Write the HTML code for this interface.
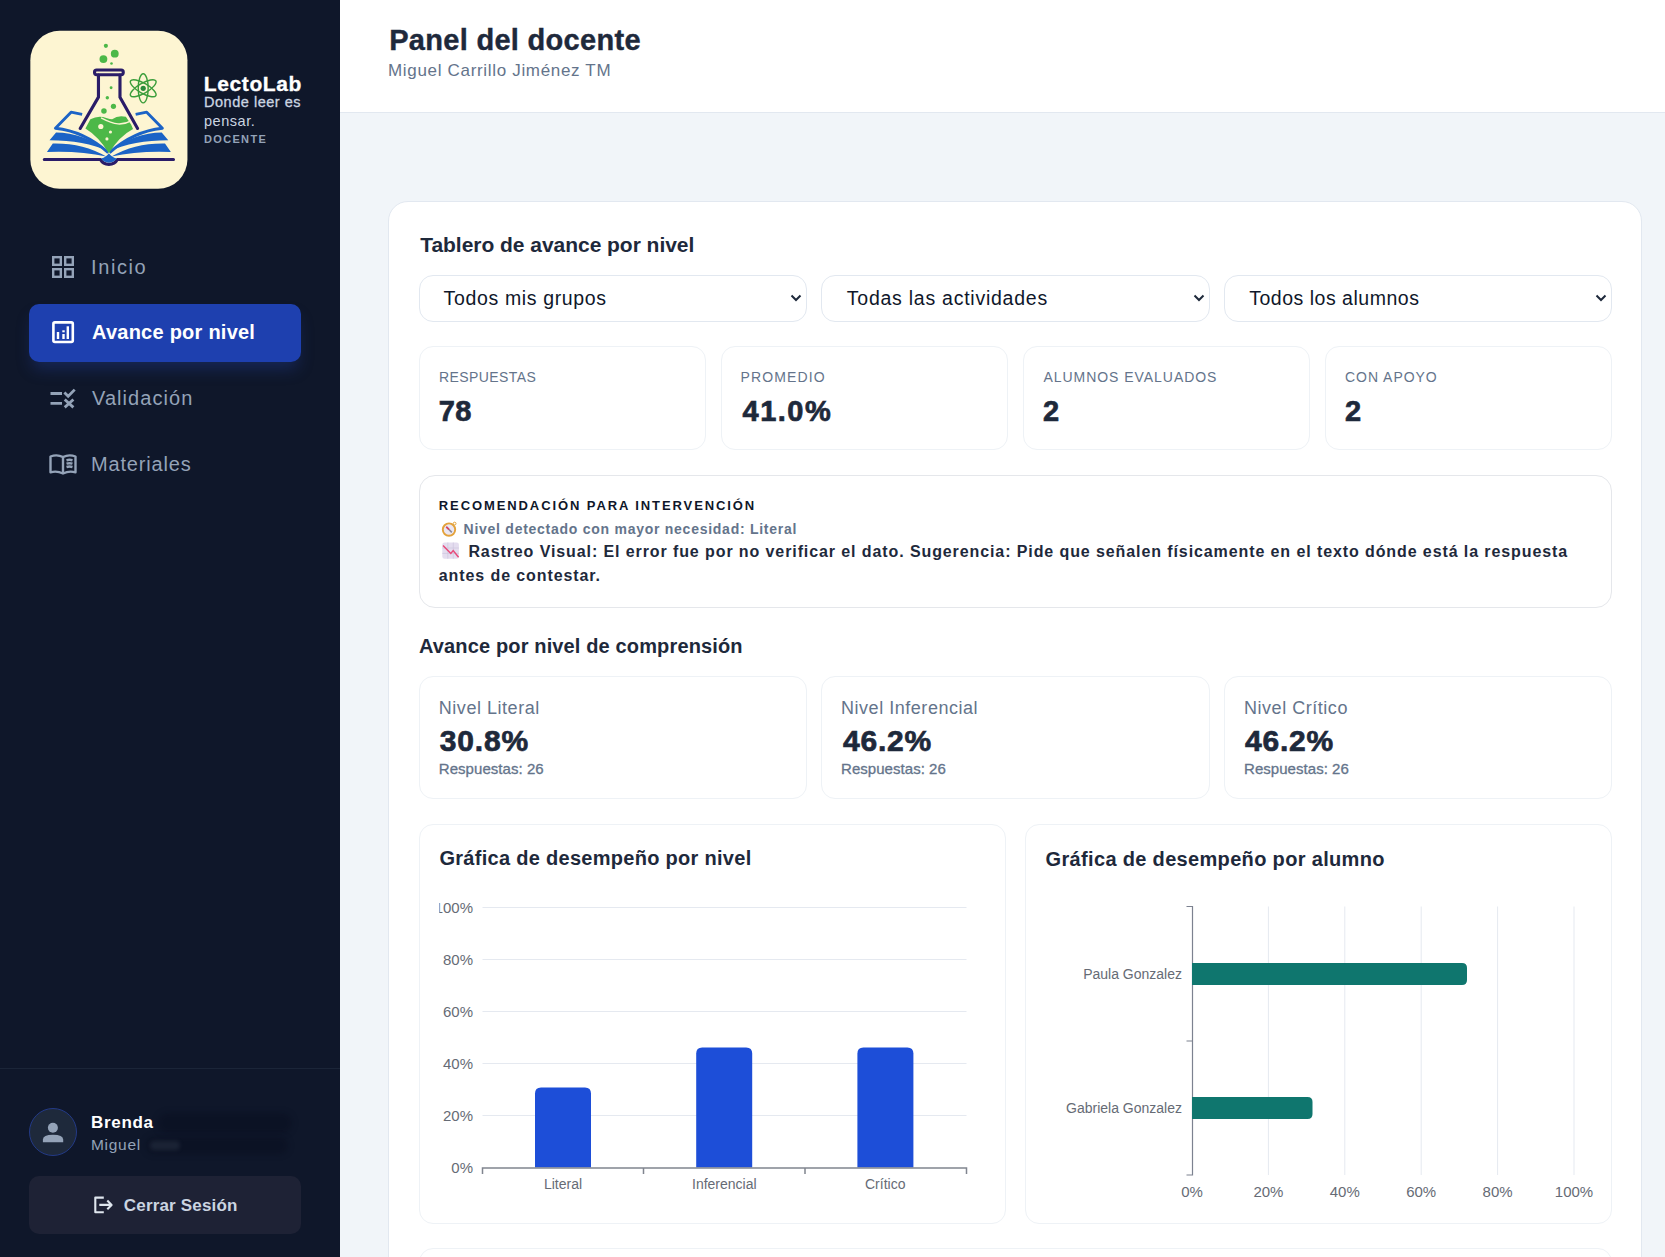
<!DOCTYPE html>
<html><head><meta charset="utf-8">
<style>
*{box-sizing:border-box;margin:0;padding:0}
html,body{width:1665px;height:1257px;overflow:hidden;background:#f1f5f9;font-family:"Liberation Sans",sans-serif}
.a{position:absolute;white-space:nowrap;line-height:1}
#side{position:absolute;left:0;top:0;width:340px;height:1257px;background:#0f172a}
#hdr{position:absolute;left:340px;top:0;width:1325px;height:113px;background:#fff;border-bottom:1px solid #e2e8f0}
.box{position:absolute;background:#fff;border:1px solid #e2e8f0}
.navt{color:#94a3b8;font-size:20px}
.sel{border-radius:14px}
.selt{font-size:20px;color:#1e293b}
.st{border-radius:14px;border-color:#eef2f6}
.stl{font-size:14px;color:#64748b;letter-spacing:0.3px}
.stv{font-size:28px;font-weight:700;color:#1e293b}
.lv{border-radius:14px;border-color:#eef2f6}
.lvl{font-size:19px;color:#64748b}
.lvv{font-size:29px;font-weight:700;color:#1e293b}
.lvr{font-size:15px;color:#64748b}
</style></head><body>
<div id="side">
  <!-- LOGO -->
  <svg class="a" style="left:28px;top:28px" width="164" height="164" viewBox="0 0 1257 1257">
    <rect x="18" y="22" width="1204" height="1210" rx="225" fill="#fdf5d2"/>
    <!-- book pages blue -->
    <g fill="#1b63c6">
      <path d="M165 860 L215 800 Q420 800 620 945 Q430 860 165 860Z"/>
      <path d="M145 950 L190 885 Q420 880 600 985 Q400 940 145 950Z"/>
      <path d="M1075 860 L1025 800 Q820 800 620 945 Q810 860 1075 860Z"/>
      <path d="M1095 950 L1050 885 Q820 880 640 985 Q840 940 1095 950Z"/>
    </g>
    <g fill="none" stroke="#1b63c6" stroke-width="22" stroke-linejoin="round">
      <path d="M415 662 L330 645 L210 768 Q430 790 615 955"/>
      <path d="M825 662 L910 645 L1030 768 Q810 790 625 955"/>
    </g>
    <!-- liquid -->
    <path d="M440 770 L478 700 Q540 665 600 690 Q630 700 645 700 Q690 665 750 680 L790 740 L805 775 Q700 830 620 960 Q540 830 440 770Z" fill="#4cb848"/>
    <path d="M560 688 Q640 730 690 735 Q745 738 790 712" fill="none" stroke="#fdf5d2" stroke-width="11"/>
    <!-- flask -->
    <g fill="none" stroke="#2a1c68" stroke-width="24" stroke-linejoin="round" stroke-linecap="round">
      <path d="M540 360 V530 L400 770"/>
      <path d="M705 360 V530 L840 770"/>
      <rect x="510" y="322" width="220" height="36" rx="16"/>
    </g>
    <g fill="#4cb848">
      <circle cx="597" cy="137" r="16"/><circle cx="665" cy="197" r="30"/><circle cx="578" cy="238" r="30"/><circle cx="640" cy="272" r="10"/>
      <circle cx="637" cy="458" r="11"/><circle cx="608" cy="535" r="13"/><circle cx="655" cy="600" r="20"/><circle cx="582" cy="637" r="21"/>
    </g>
    <g fill="#fdf5d2"><circle cx="558" cy="755" r="20"/><circle cx="632" cy="797" r="12"/><circle cx="605" cy="850" r="12"/></g>
    <!-- atom -->
    <g fill="none" stroke="#3a9d3a" stroke-width="11">
      <ellipse cx="883" cy="462" rx="112" ry="38" transform="rotate(90 883 462)"/>
      <ellipse cx="883" cy="462" rx="112" ry="38" transform="rotate(30 883 462)"/>
      <ellipse cx="883" cy="462" rx="112" ry="38" transform="rotate(150 883 462)"/>
    </g>
    <circle cx="883" cy="462" r="20" fill="#2a8a3a"/>
    <!-- base -->
    <path d="M125 1008 H555 Q575 1045 620 1045 Q665 1045 685 1008 H1115" fill="none" stroke="#2a1c68" stroke-width="24" stroke-linecap="round" stroke-linejoin="round"/>
    <path d="M560 1000 Q600 990 620 960 Q640 990 680 1000 Q660 1030 620 1032 Q580 1030 560 1000Z" fill="#1b63c6"/>
  </svg>

  <!-- NAV -->
  <div class="a" style="left:29px;top:304px;width:272px;height:58px;background:#1e40af;border-radius:10px;box-shadow:0 10px 15px -3px rgba(30,58,138,0.45)"></div>


  <!-- bottom -->
  <div class="a" style="left:0;top:1068px;width:340px;height:1px;background:#1b2538"></div>
  <div class="a" style="left:29px;top:1108px;width:48px;height:48px;border-radius:50%;background:#1e293b;border:1.5px solid #233a86"></div>
  <div class="a" style="left:158px;top:1113px;width:134px;height:20px;border-radius:10px;background:rgba(4,8,22,0.3);filter:blur(3px)"></div>
  <div class="a" style="left:146px;top:1137px;width:142px;height:17px;border-radius:9px;background:rgba(4,8,22,0.3);filter:blur(3px)"></div>
  <div class="a" style="left:150px;top:1141px;width:30px;height:9px;border-radius:5px;background:rgba(148,163,184,0.12);filter:blur(2px)"></div>
  <div class="a" style="left:29px;top:1176px;width:272px;height:58px;background:#1e2235;border-radius:10px"></div>
  <svg class="a" style="left:0;top:0" width="340" height="1257" viewBox="0 0 340 1257">
    <g fill="none" stroke="#94a3b8" stroke-width="2.4">
      <rect x="53.2" y="257.2" width="7.6" height="7.6"/><rect x="65.2" y="257.2" width="7.6" height="7.6"/>
      <rect x="53.2" y="269.2" width="7.6" height="7.6"/><rect x="65.2" y="269.2" width="7.6" height="7.6"/>
    </g>
    <g fill="none" stroke="#fff" stroke-width="2.6">
      <rect x="53.4" y="322.4" width="19.4" height="19.6" rx="1.5"/>
    </g>
    <g fill="#fff">
      <rect x="56.8" y="332" width="2.4" height="7"/><rect x="62.3" y="330.3" width="2.4" height="2"/><rect x="62.3" y="334" width="2.4" height="5"/><rect x="66.6" y="326.3" width="2.4" height="12.7"/>
    </g>
    <g fill="none" stroke="#94a3b8" stroke-width="2.8">
      <path d="M50.5 393.5H62M50.5 403.3H62"/>
      <path d="M64.4 392.4L68.2 396.3L74.7 389.6M64.7 399.5L73.4 407.4M73.4 399.5L64.7 407.4"/>
    </g>
    <g fill="none" stroke="#94a3b8" stroke-width="2.4" stroke-linejoin="round">
      <path d="M50.5 456.5Q57 454 63 457Q69 454 75.5 456.5V472.3Q69 470.5 63 473.5Q57 470.5 50.5 472.3Z"/>
      <path d="M63 457V473"/>
      <path d="M66.5 460.3Q69.5 459.3 72.5 460.3M66.5 463.7Q69.5 462.7 72.5 463.7M66.5 467Q69.5 466 72.5 467"/>
    </g>
    <!-- avatar person -->
    <g fill="#94a3b8">
      <circle cx="52.9" cy="1127.7" r="5"/>
      <path d="M42.9 1142.2V1139.5Q42.9 1134.8 53 1134.8Q63.2 1134.8 63.2 1139.5V1142.2Z"/>
    </g>
    <!-- logout -->
    <g fill="none" stroke="#dfe6ee" stroke-width="2.1" stroke-linejoin="round">
      <path d="M103.8 1197.6H95.3V1212.2H103.8"/>
      <path d="M99.3 1204.9H112M107.3 1200.6L111.6 1204.9L107.3 1209.2"/>
    </g>
  </svg>
</div>

<div id="hdr"></div>

<!-- main card -->
<div class="box" style="left:388px;top:201px;width:1254px;height:1100px;border-radius:20px"></div>


<!-- selects -->
<div class="box sel" style="left:419px;top:275px;width:388px;height:47px"></div>
<div class="box sel" style="left:821px;top:275px;width:389px;height:47px"></div>
<div class="box sel" style="left:1224px;top:275px;width:388px;height:47px"></div>
<svg class="a" style="left:790px;top:294px" width="12" height="8" viewBox="0 0 12 8"><path d="M1.5 1.5L6 6L10.5 1.5" fill="none" stroke="#1e293b" stroke-width="2"/></svg>
<svg class="a" style="left:1193px;top:294px" width="12" height="8" viewBox="0 0 12 8"><path d="M1.5 1.5L6 6L10.5 1.5" fill="none" stroke="#1e293b" stroke-width="2"/></svg>
<svg class="a" style="left:1595px;top:294px" width="12" height="8" viewBox="0 0 12 8"><path d="M1.5 1.5L6 6L10.5 1.5" fill="none" stroke="#1e293b" stroke-width="2"/></svg>

<!-- stat cards -->
<div class="box st" style="left:419px;top:346px;width:287px;height:104px"></div>
<div class="box st" style="left:721px;top:346px;width:287px;height:104px"></div>
<div class="box st" style="left:1023px;top:346px;width:287px;height:104px"></div>
<div class="box st" style="left:1325px;top:346px;width:287px;height:104px"></div>

<!-- recommendation -->
<div class="box" style="left:419px;top:475px;width:1193px;height:133px;border-radius:16px;border-color:#e5e7eb"></div>

<!-- levels -->
<div class="box lv" style="left:419px;top:676px;width:388px;height:123px"></div>
<div class="box lv" style="left:821px;top:676px;width:389px;height:123px"></div>
<div class="box lv" style="left:1224px;top:676px;width:388px;height:123px"></div>

<!-- charts -->
<div class="box" style="left:419px;top:824px;width:587px;height:400px;border-radius:14px;border-color:#eef2f6"></div>
<div class="box" style="left:1025px;top:824px;width:587px;height:400px;border-radius:14px;border-color:#eef2f6"></div>

<svg class="a" style="left:0;top:0" width="1665" height="1257" viewBox="0 0 1665 1257">
<defs><clipPath id="c1"><rect x="439.3" y="880" width="560" height="330"/></clipPath></defs>
<g clip-path="url(#c1)" font-family="Liberation Sans" font-size="15" fill="#666b75" text-anchor="end">
<text x="473" y="1172.5">0%</text>
<line x1="482.5" y1="1115.5" x2="966.5" y2="1115.5" stroke="#e5e9f0" stroke-width="1"/>
<text x="473" y="1120.5">20%</text>
<line x1="482.5" y1="1063.5" x2="966.5" y2="1063.5" stroke="#e5e9f0" stroke-width="1"/>
<text x="473" y="1068.5">40%</text>
<line x1="482.5" y1="1011.5" x2="966.5" y2="1011.5" stroke="#e5e9f0" stroke-width="1"/>
<text x="473" y="1016.5">60%</text>
<line x1="482.5" y1="959.5" x2="966.5" y2="959.5" stroke="#e5e9f0" stroke-width="1"/>
<text x="473" y="964.5">80%</text>
<line x1="482.5" y1="907.5" x2="966.5" y2="907.5" stroke="#e5e9f0" stroke-width="1"/>
<text x="473" y="912.5">100%</text>
</g>
<path d="M535 1167.5V1093.42Q535 1087.42 541 1087.42H585Q591 1087.42 591 1093.42V1167.5Z" fill="#1d4ed8"/>
<path d="M696.2 1167.5V1053.38Q696.2 1047.38 702.2 1047.38H746.2Q752.2 1047.38 752.2 1053.38V1167.5Z" fill="#1d4ed8"/>
<path d="M857.4 1167.5V1053.38Q857.4 1047.38 863.4 1047.38H907.4Q913.4 1047.38 913.4 1053.38V1167.5Z" fill="#1d4ed8"/>
<path d="M482.5 1174V1168H966.5V1174M643.5 1168V1174M805 1168V1174" fill="none" stroke="#80858f" stroke-width="1.5"/>
<g font-family="Liberation Sans" font-size="14" fill="#666b75" text-anchor="middle">
<text x="563" y="1189">Literal</text>
<text x="724.3" y="1189">Inferencial</text>
<text x="885.2" y="1189">Crítico</text>
</g>
<line x1="1268.4" y1="906.5" x2="1268.4" y2="1175" stroke="#e5e9f0" stroke-width="1"/>
<line x1="1344.8" y1="906.5" x2="1344.8" y2="1175" stroke="#e5e9f0" stroke-width="1"/>
<line x1="1421.2" y1="906.5" x2="1421.2" y2="1175" stroke="#e5e9f0" stroke-width="1"/>
<line x1="1497.6" y1="906.5" x2="1497.6" y2="1175" stroke="#e5e9f0" stroke-width="1"/>
<line x1="1574.0" y1="906.5" x2="1574.0" y2="1175" stroke="#e5e9f0" stroke-width="1"/>
<path d="M1186.5 906.5H1192.5V1175H1186.5M1186.5 1041H1192.5" fill="none" stroke="#7c8290" stroke-width="1.2"/>
<path d="M1192 963H1462Q1467 963 1467 968V980Q1467 985 1462 985H1192Z" fill="#0f766e"/>
<path d="M1192 1097H1307.5Q1312.5 1097 1312.5 1102V1114Q1312.5 1119 1307.5 1119H1192Z" fill="#0f766e"/>
<g font-family="Liberation Sans" font-size="14" fill="#666b75" text-anchor="end">
<text x="1182" y="979">Paula Gonzalez</text><text x="1182" y="1113">Gabriela Gonzalez</text></g>
<g font-family="Liberation Sans" font-size="15" fill="#666b75" text-anchor="middle">
<text x="1192.0" y="1197">0%</text>
<text x="1268.4" y="1197">20%</text>
<text x="1344.8" y="1197">40%</text>
<text x="1421.2" y="1197">60%</text>
<text x="1497.6" y="1197">80%</text>
<text x="1574.0" y="1197">100%</text>
</g></svg>
<!-- bottom card -->
<div class="box" style="left:419px;top:1248px;width:1193px;height:100px;border-radius:14px;border-color:#eef2f6"></div>

<!-- emojis -->
<svg class="a" style="left:0;top:0" width="1665" height="1257" viewBox="0 0 1665 1257">
  <circle cx="449" cy="529.6" r="6.2" fill="#ebe6f2" stroke="#e3a23b" stroke-width="1.9"/>
  <circle cx="454.6" cy="523.6" r="1.4" fill="none" stroke="#e3a23b" stroke-width="1"/>
  <path d="M446.3 526.8L451.8 532.4" stroke="#8a8a9a" stroke-width="1.6"/>
  <path d="M446.3 526.8L449 529.5" stroke="#e0405a" stroke-width="1.7"/>
  <rect x="442.3" y="542.5" width="16.6" height="16.2" rx="2.2" fill="#e4ddef"/>
  <path d="M447.8 542.5V558.7M453.3 542.5V558.7M442.3 548H458.9M442.3 553.4H458.9" stroke="#cfc6de" stroke-width="0.7"/>
  <path d="M443 545.4L450.8 553.4L453.2 550.6L458.6 557.2" fill="none" stroke="#e84a7a" stroke-width="1.5"/>
</svg>
<div id="lg1" class="a" style="left:203.80px;top:72.61px;font-size:21px;font-weight:700;color:#ffffff;letter-spacing:0.614px;-webkit-text-stroke:0.3px #ffffff">LectoLab</div>
<div id="lg2" class="a" style="left:204.00px;top:94.81px;font-size:14.5px;font-weight:500;color:#cbd5e1;letter-spacing:0.525px;-webkit-text-stroke:0.3px #cbd5e1">Donde leer es</div>
<div id="lg3" class="a" style="left:204.00px;top:113.91px;font-size:14.5px;font-weight:500;color:#cbd5e1;letter-spacing:0.525px">pensar.</div>
<div id="lg4" class="a" style="left:204.00px;top:133.51px;font-size:11px;font-weight:700;color:#94a3b8;letter-spacing:1.333px">DOCENTE</div>
<div id="n1" class="a" style="left:91.00px;top:257.10px;font-size:20px;font-weight:400;color:#94a3b8;letter-spacing:1.600px">Inicio</div>
<div id="n2" class="a" style="left:92.00px;top:322.21px;font-size:20px;font-weight:700;color:#ffffff;letter-spacing:0.240px">Avance por nivel</div>
<div id="n3" class="a" style="left:92.00px;top:388.00px;font-size:20px;font-weight:400;color:#94a3b8;letter-spacing:1.056px">Validación</div>
<div id="n4" class="a" style="left:91.00px;top:454.10px;font-size:20px;font-weight:400;color:#94a3b8;letter-spacing:0.833px">Materiales</div>
<div id="u1" class="a" style="left:91.00px;top:1114.20px;font-size:17px;font-weight:700;color:#ffffff;letter-spacing:0.700px">Brenda</div>
<div id="u2" class="a" style="left:91.00px;top:1137.30px;font-size:15.5px;font-weight:400;color:#94a3b8;letter-spacing:0.700px">Miguel</div>
<div id="u3" class="a" style="left:123.80px;top:1197.10px;font-size:17px;font-weight:700;color:#cbd5e1;letter-spacing:0.175px">Cerrar Sesión</div>
<div id="h1" class="a" style="left:389.20px;top:26.31px;font-size:29px;font-weight:700;color:#1e293b;letter-spacing:0.300px;-webkit-text-stroke:0.4px #1e293b">Panel del docente</div>
<div id="h2" class="a" style="left:388.00px;top:62.31px;font-size:17px;font-weight:400;color:#64748b;letter-spacing:0.678px">Miguel Carrillo Jiménez TM</div>
<div id="tb1" class="a" style="left:420.20px;top:234.41px;font-size:21px;font-weight:700;color:#1e293b;letter-spacing:-0.035px">Tablero de avance por nivel</div>
<div id="s1" class="a" style="left:443.60px;top:288.60px;font-size:19.5px;font-weight:400;color:#0f172a;letter-spacing:0.640px">Todos mis grupos</div>
<div id="s2" class="a" style="left:846.80px;top:288.60px;font-size:19.5px;font-weight:400;color:#0f172a;letter-spacing:0.750px">Todas las actividades</div>
<div id="s3" class="a" style="left:1249.20px;top:288.60px;font-size:19.5px;font-weight:400;color:#0f172a;letter-spacing:0.512px">Todos los alumnos</div>
<div id="k1" class="a" style="left:439.00px;top:369.91px;font-size:14px;font-weight:400;color:#64748b;letter-spacing:0.411px">RESPUESTAS</div>
<div id="k2" class="a" style="left:740.60px;top:369.91px;font-size:14px;font-weight:400;color:#64748b;letter-spacing:1.100px">PROMEDIO</div>
<div id="k3" class="a" style="left:1043.40px;top:369.91px;font-size:14px;font-weight:400;color:#64748b;letter-spacing:0.962px">ALUMNOS EVALUADOS</div>
<div id="k4" class="a" style="left:1345.00px;top:369.91px;font-size:14px;font-weight:400;color:#64748b;letter-spacing:0.962px">CON APOYO</div>
<div id="v1" class="a" style="left:438.80px;top:396.72px;font-size:29px;font-weight:700;color:#1e293b;letter-spacing:0.300px;-webkit-text-stroke:0.7px #1e293b">78</div>
<div id="v2" class="a" style="left:742.60px;top:397.01px;font-size:29px;font-weight:700;color:#1e293b;letter-spacing:1.475px;-webkit-text-stroke:0.7px #1e293b">41.0%</div>
<div id="v3" class="a" style="left:1043.00px;top:397.01px;font-size:29px;font-weight:700;color:#1e293b;letter-spacing:0.000px;-webkit-text-stroke:0.7px #1e293b">2</div>
<div id="v4" class="a" style="left:1345.00px;top:397.01px;font-size:29px;font-weight:700;color:#1e293b;letter-spacing:0.000px;-webkit-text-stroke:0.7px #1e293b">2</div>
<div id="r1" class="a" style="left:438.80px;top:499.01px;font-size:13px;font-weight:700;color:#0f172a;letter-spacing:1.903px">RECOMENDACIÓN PARA INTERVENCIÓN</div>
<div id="r2" class="a" style="left:463.60px;top:521.72px;font-size:14px;font-weight:700;color:#64748b;letter-spacing:0.737px">Nivel detectado con mayor necesidad: Literal</div>
<div id="r3" class="a" style="left:468.40px;top:543.51px;font-size:16px;font-weight:700;color:#1e293b;letter-spacing:0.903px">Rastreo Visual: El error fue por no verificar el dato. Sugerencia: Pide que señalen físicamente en el texto dónde está la respuesta</div>
<div id="r4" class="a" style="left:438.80px;top:567.70px;font-size:16px;font-weight:700;color:#1e293b;letter-spacing:0.903px">antes de contestar.</div>
<div id="l0" class="a" style="left:419.00px;top:635.71px;font-size:20px;font-weight:700;color:#1e293b;letter-spacing:0.140px">Avance por nivel de comprensión</div>
<div id="l1" class="a" style="left:438.80px;top:699.11px;font-size:18px;font-weight:400;color:#64748b;letter-spacing:0.533px">Nivel Literal</div>
<div id="l2" class="a" style="left:841.00px;top:699.11px;font-size:18px;font-weight:400;color:#64748b;letter-spacing:0.533px">Nivel Inferencial</div>
<div id="l3" class="a" style="left:1244.00px;top:699.11px;font-size:18px;font-weight:400;color:#64748b;letter-spacing:0.533px">Nivel Crítico</div>
<div id="p1" class="a" style="left:439.80px;top:725.90px;font-size:30px;font-weight:700;color:#1e293b;letter-spacing:0.800px;-webkit-text-stroke:0.7px #1e293b">30.8%</div>
<div id="p2" class="a" style="left:843.00px;top:725.90px;font-size:30px;font-weight:700;color:#1e293b;letter-spacing:0.800px;-webkit-text-stroke:0.7px #1e293b">46.2%</div>
<div id="p3" class="a" style="left:1245.00px;top:725.90px;font-size:30px;font-weight:700;color:#1e293b;letter-spacing:0.800px;-webkit-text-stroke:0.7px #1e293b">46.2%</div>
<div id="q1" class="a" style="left:438.80px;top:761.00px;font-size:15px;font-weight:500;color:#64748b;letter-spacing:0.046px;-webkit-text-stroke:0.3px #64748b">Respuestas: 26</div>
<div id="q2" class="a" style="left:841.00px;top:761.00px;font-size:15px;font-weight:500;color:#64748b;letter-spacing:0.046px;-webkit-text-stroke:0.3px #64748b">Respuestas: 26</div>
<div id="q3" class="a" style="left:1244.00px;top:761.00px;font-size:15px;font-weight:500;color:#64748b;letter-spacing:0.046px;-webkit-text-stroke:0.3px #64748b">Respuestas: 26</div>
<div id="g1" class="a" style="left:439.40px;top:848.10px;font-size:20px;font-weight:700;color:#1e293b;letter-spacing:0.290px">Gráfica de desempeño por nivel</div>
<div id="g2" class="a" style="left:1045.60px;top:848.50px;font-size:20px;font-weight:700;color:#1e293b;letter-spacing:0.330px">Gráfica de desempeño por alumno</div>
</body></html>
